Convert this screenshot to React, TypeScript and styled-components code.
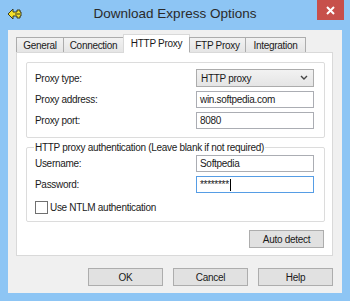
import * as React from 'react';
import styled, { createGlobalStyle } from 'styled-components';

const GlobalStyle = createGlobalStyle`
  html, body {
    margin: 0;
    padding: 0;
    background: #8dc5f4;
  }
  * {
    box-sizing: border-box;
  }
`;

const Window = styled.div`
  width: 350px;
  height: 301px;
  background: #8dc5f4;
  display: flex;
  flex-direction: column;
  font-family: "Liberation Sans", Arial, sans-serif;
  font-size: 10px;
  letter-spacing: -0.3px;
  color: #1a1a1a;
  overflow: hidden;
`;

const TitleBar = styled.div`
  height: 30px;
  display: flex;
  align-items: flex-start;
  flex-shrink: 0;
`;

const AppIcon = styled.div`
  width: 16px;
  height: 16px;
  margin: 6px 0 0 7px;
`;

const Title = styled.div`
  flex: 1;
  text-align: center;
  font-size: 13.5px;
  letter-spacing: 0;
  line-height: 15px;
  padding-top: 6px;
  padding-left: 10px;
  color: #2a2a2a;
`;

const CloseButton = styled.div`
  width: 27px;
  height: 20px;
  margin-right: 6px;
  background: #c7504b;
  display: flex;
  align-items: center;
  justify-content: center;
`;

const Client = styled.div`
  margin: 0 8px;
  height: 263px;
  background: #f0f0f0;
  padding-top: 5px;
  display: flex;
  flex-direction: column;
`;

const TabBar = styled.div`
  display: flex;
  align-items: flex-end;
  padding-left: 8px;
  height: 17px;
  position: relative;
  z-index: 1;
`;

const Tab = styled.div<{ $active?: boolean; $w: number }>`
  width: ${p => p.$w}px;
  height: ${p => (p.$active ? 19 : 15)}px;
  margin-bottom: ${p => (p.$active ? -1 : 0)}px;
  border: 1px solid ${p => (p.$active ? '#d9d9d9' : '#acacac')};
  border-bottom: none;
  background: ${p => (p.$active ? '#fff' : 'linear-gradient(#f2f2f2, #e5e5e5)')};
  display: flex;
  justify-content: center;
  align-items: ${p => (p.$active ? 'flex-start' : 'center')};
  padding-top: ${p => (p.$active ? 3 : 0)}px;
  white-space: nowrap;
  & + & {
    margin-left: -1px;
  }
`;

const Panel = styled.div`
  margin: 0 9px 0 8px;
  height: 204px;
  background: #fff;
  border: 1px solid #d9d9d9;
  padding: 9px 7px 0 9px;
  display: flex;
  flex-direction: column;
`;

const GroupBox = styled.div`
  border: 1px solid #dcdcdc;
  border-radius: 2px;
  padding: 6px 10px 8px 8px;
`;

const Fieldset = styled.fieldset`
  margin: 3px 0 0 0;
  border: 1px solid #dcdcdc;
  border-radius: 2px;
  padding: 0 10px 7px 8px;
  min-width: 0;
`;

const Legend = styled.legend`
  padding: 0 1px;
  line-height: 13px;
  margin-left: -1px;
`;

const FieldGrid = styled.div<{ $mt?: number }>`
  display: grid;
  grid-template-columns: 161px 118px;
  row-gap: 4px;
  align-items: center;
  margin-top: ${p => p.$mt || 0}px;
`;

const Label = styled.div`
  white-space: nowrap;
`;

const Select = styled.div`
  height: 18px;
  border: 1px solid #acacac;
  background: linear-gradient(#f2f2f2, #e5e5e5);
  display: flex;
  align-items: center;
  justify-content: space-between;
  padding: 0 5px 0 4px;
`;

const TextBox = styled.div<{ $focused?: boolean }>`
  height: 17px;
  border: 1px solid ${p => (p.$focused ? '#569de5' : '#abadb3')};
  background: #fff;
  display: flex;
  align-items: center;
  padding-left: 3px;
  white-space: nowrap;
`;

const Caret = styled.span`
  display: inline-block;
  width: 1px;
  height: 12px;
  background: #000;
  margin-left: 1px;
`;

const CheckRow = styled.label`
  display: flex;
  align-items: center;
  gap: 2px;
  margin-top: 8px;
`;

const CheckBox = styled.span`
  width: 13px;
  height: 13px;
  border: 1px solid #707070;
  background: #fff;
  display: inline-block;
`;

const ActionRow = styled.div<{ $mt: number; $pr: number; $gap?: number }>`
  display: flex;
  justify-content: flex-end;
  gap: ${p => p.$gap || 0}px;
  margin-top: ${p => p.$mt}px;
  padding-right: ${p => p.$pr}px;
`;

const Button = styled.div`
  width: 75px;
  height: 18px;
  border: 1px solid #adadad;
  background: #e1e1e1;
  display: flex;
  align-items: center;
  justify-content: center;
`;

const ArrowIcon = () => (
  <svg width="16" height="16" viewBox="0 0 16 16">
    <path
      d="M1 8 L6 3 L6 6 L10 6 L10 4 L13 4 L13 6 L14 6 L14 10 L13 10 L13 12 L10 12 L10 10 L6 10 L6 13 Z"
      fill="#f4e12a"
      stroke="#3a3a20"
      strokeWidth="1"
      strokeLinejoin="round"
    />
    <path d="M8 8 L13 8" stroke="#3a3a20" strokeWidth="1" />
  </svg>
);

const CloseX = () => (
  <svg width="9" height="9" viewBox="0 0 9 9">
    <path d="M1 1 L8 8 M8 1 L1 8" stroke="#fff" strokeWidth="2" />
  </svg>
);

const Chevron = () => (
  <svg width="8" height="6" viewBox="0 0 8 6">
    <path d="M1 1 L4 4 L7 1" stroke="#444" strokeWidth="1.4" fill="none" />
  </svg>
);

const tabs = [
  { label: 'General', w: 48 },
  { label: 'Connection', w: 61 },
  { label: 'HTTP Proxy', w: 67, active: true },
  { label: 'FTP Proxy', w: 57 },
  { label: 'Integration', w: 61 },
];

export default function App() {
  return (
    <Window>
      <GlobalStyle />
      <TitleBar>
        <AppIcon>
          <ArrowIcon />
        </AppIcon>
        <Title>Download Express Options</Title>
        <CloseButton>
          <CloseX />
        </CloseButton>
      </TitleBar>
      <Client>
        <TabBar>
          {tabs.map(t => (
            <Tab key={t.label} $w={t.w} $active={t.active}>
              {t.label}
            </Tab>
          ))}
        </TabBar>
        <Panel>
          <GroupBox>
            <FieldGrid>
              <Label>Proxy type:</Label>
              <Select>
                <span>HTTP proxy</span>
                <Chevron />
              </Select>
              <Label>Proxy address:</Label>
              <TextBox>win.softpedia.com</TextBox>
              <Label>Proxy port:</Label>
              <TextBox>8080</TextBox>
            </FieldGrid>
          </GroupBox>
          <Fieldset>
            <Legend>HTTP proxy authentication (Leave blank if not required)</Legend>
            <FieldGrid $mt={1}>
              <Label>Username:</Label>
              <TextBox>Softpedia</TextBox>
              <Label>Password:</Label>
              <TextBox $focused>
                ********
                <Caret />
              </TextBox>
            </FieldGrid>
            <CheckRow>
              <CheckBox />
              <span>Use NTLM authentication</span>
            </CheckRow>
          </Fieldset>
          <ActionRow $mt={8} $pr={1}>
            <Button>Auto detect</Button>
          </ActionRow>
        </Panel>
        <ActionRow $mt={12} $pr={9} $gap={10}>
          <Button>OK</Button>
          <Button>Cancel</Button>
          <Button>Help</Button>
        </ActionRow>
      </Client>
    </Window>
  );
}
